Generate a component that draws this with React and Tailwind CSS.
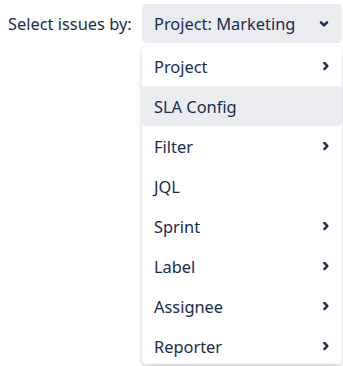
import React from "react";

const Chevron = ({ dir = "right" }) => (
  <svg
    width="12"
    height="12"
    viewBox="0 0 12 12"
    className="shrink-0"
    style={{ transform: dir === "down" ? "rotate(90deg)" : "none" }}
  >
    <path d="M4.3 2.9 L7.4 6 L4.3 9.1" fill="none" stroke="#172b4d" strokeWidth="2.4" strokeLinecap="round" strokeLinejoin="round" />
  </svg>
);

const items = [
  { label: "Project", sub: true },
  { label: "SLA Config", sub: false, active: true },
  { label: "Filter", sub: true },
  { label: "JQL", sub: false },
  { label: "Sprint", sub: true },
  { label: "Label", sub: true },
  { label: "Assignee", sub: true },
  { label: "Reporter", sub: true },
];

export default function App() {
  return (
    <div
      className="w-[343px] h-[366px] bg-white overflow-hidden text-[#172b4d]"
      style={{ fontFamily: '"Noto Sans", "Open Sans", sans-serif' }}
    >
      <div className="flex items-start pt-1">
        <div className="pl-2 w-[142px] h-[39px] flex items-center pt-[2px] text-[16.4px]">Select issues by:</div>
        <div className="flex flex-col w-[200px]">
          <div className="h-[39px] rounded-[4px] bg-[#ebecf0] flex items-center justify-between pl-3 pr-3 text-[16.4px]">
            <span className="pt-[2px]">Project: Marketing</span>
            <Chevron dir="down" />
          </div>
          <div className="mt-[3px] h-[318px] rounded-[4px] bg-white shadow-[0_0_1px_rgba(9,30,66,0.31),0_4px_8px_-2px_rgba(9,30,66,0.25)] flex flex-col">
            {items.map((it) => (
              <div
                key={it.label}
                className={
                  "h-[40px] shrink-0 flex items-center justify-between pl-3 pr-[10px] text-[16.4px] rounded-[3px] " +
                  (it.active ? "bg-[#ebecf0]" : "")
                }
              >
                <span className="pt-[3px]">{it.label}</span>
                {it.sub ? <Chevron /> : null}
              </div>
            ))}
          </div>
        </div>
      </div>
    </div>
  );
}
